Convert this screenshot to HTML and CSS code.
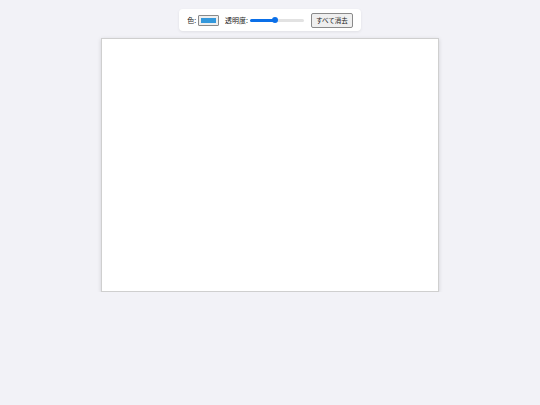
FILE: index.html
```html
<!DOCTYPE html>
<html lang="ja">
<head>
<meta charset="utf-8">
<title>お絵かき</title>
<link rel="stylesheet" href="styles.css">
</head>
<body>
<div class="app">
  <div class="toolbar">
    <label class="field">色:<input class="color" type="color" value="#3498db"></label>
    <label class="field">透明度:<input class="range" type="range" min="0" max="100" value="45"></label>
    <button class="clear" type="button">すべて消去</button>
  </div>
  <canvas class="board" width="338" height="253"></canvas>
</div>
</body>
</html>
```
FILE: styles.css
```css
html, body {
  margin: 0;
  padding: 0;
  background: #f2f2f7;
  font-family: "Noto Sans CJK JP", "Noto Sans", sans-serif;
  color: #222;
}
.app {
  display: flex;
  flex-direction: column;
  align-items: center;
  padding-top: 9px;
  gap: 7px;
}
.toolbar {
  display: flex;
  align-items: center;
  gap: 6px;
  height: 22px;
  box-sizing: border-box;
  padding: 0 8px;
  background: #fff;
  border-radius: 4px;
  box-shadow: 0 1px 3px rgba(0, 0, 0, 0.08);
  font-size: 7px;
}
.field {
  display: flex;
  align-items: center;
  gap: 2px;
}
.color {
  -webkit-appearance: none;
  appearance: none;
  width: 21px;
  height: 11px;
  padding: 1px;
  margin: 0;
  border: 1px solid #8a8a8a;
  border-radius: 1px;
  background: #efefef;
  box-sizing: border-box;
}
.color::-webkit-color-swatch-wrapper {
  padding: 1px;
}
.color::-webkit-color-swatch {
  border: none;
  border-radius: 0;
}
.range {
  -webkit-appearance: none;
  appearance: none;
  width: 54px;
  height: 6px;
  margin: 0;
  background: transparent;
}
.range::-webkit-slider-runnable-track {
  height: 3px;
  border-radius: 2px;
  background: linear-gradient(to right, #0a6fe8 0 45%, #e2e2e2 45% 100%);
}
.range::-webkit-slider-thumb {
  -webkit-appearance: none;
  width: 6px;
  height: 6px;
  margin-top: -1.5px;
  border-radius: 50%;
  background: #0a6fe8;
  border: none;
}
.clear {
  margin-left: 1px;
  height: 15px;
  padding: 0 4px;
  font-family: inherit;
  font-size: 6.5px;
  color: #222;
  background: #efefef;
  border: 1px solid #8a8a8a;
  border-radius: 2px;
}
.board {
  display: block;
  width: 338px;
  height: 254px;
  background: #fff;
  border: 1px solid #cfcfcf;
  box-sizing: border-box;
  box-shadow: 0 1px 4px rgba(0, 0, 0, 0.14);
}
```
